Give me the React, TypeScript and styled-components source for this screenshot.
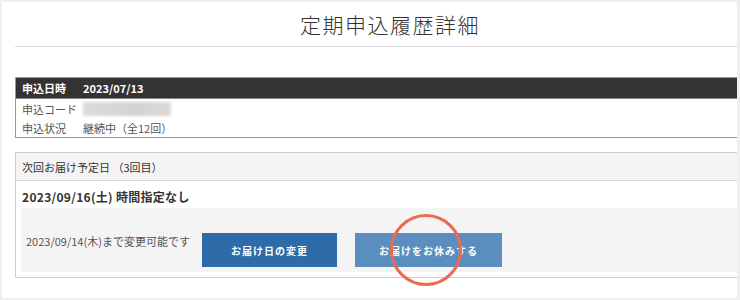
import styled, { createGlobalStyle } from "styled-components";

const GlobalStyle = createGlobalStyle`
  html, body {
    margin: 0;
    padding: 0;
    background: #efefef;
  }
  body {
    font-family: "Noto Sans CJK JP", "Noto Sans", sans-serif;
    color: #333;
  }
`;

const Page = styled.div`
  width: 740px;
  height: 300px;
  box-sizing: border-box;
  padding: 2px 3px 2px 2px;
  overflow: hidden;
`;

const Panel = styled.div`
  background: #fff;
  height: 100%;
  box-sizing: border-box;
  padding-left: 13px;
`;

const Title = styled.h1`
  margin: 0;
  height: 44px;
  border-bottom: 1px solid #ddd;
  display: flex;
  align-items: center;
  justify-content: center;
  padding-left: 28px;
  font-size: 21px;
  font-weight: 300;
  letter-spacing: 1.5px;
  color: #333;
`;

const InfoBox = styled.div`
  margin-top: 30px;
  border: 1px solid #999;
  border-right: none;
`;

const InfoHead = styled.div`
  height: 20px;
  background: #333;
  border-bottom: 1px solid #888;
  display: flex;
  align-items: center;
  padding-left: 6px;
  color: #fff;
  font-size: 11px;
  font-weight: bold;
`;

const InfoRow = styled.div`
  height: 19px;
  display: flex;
  align-items: center;
  padding-left: 6px;
  font-size: 11px;
  color: #555;
`;

const Label = styled.span`
  width: 61px;
  flex-shrink: 0;
`;

const Hidden = styled.span`
  width: 88px;
  height: 14px;
  background: linear-gradient(90deg, #dcdcdc, #d2d2d2 60%, #dadada);
  filter: blur(1.5px);
`;

const DeliveryBox = styled.div`
  margin-top: 14px;
  border: 1px solid #ccc;
  border-right: none;
`;

const DeliveryHead = styled.div`
  height: 27px;
  background: #f4f4f4;
  border-bottom: 1px solid #d5d5d5;
  display: flex;
  align-items: center;
  padding-left: 6px;
  font-size: 11px;
  color: #333;
`;

const DateRow = styled.div`
  height: 23px;
  padding: 4px 0 0 6px;
  display: flex;
  align-items: center;
  font-size: 12px;
  font-weight: bold;
  letter-spacing: 0.3px;
  color: #333;
`;

const ActionArea = styled.div`
  margin: 0 0 5px 5px;
  background: #f4f4f4;
  padding: 25px 0 5px 5px;
  display: flex;
  align-items: flex-start;
`;

const Notice = styled.div`
  width: 176px;
  padding-top: 1px;
  font-size: 11px;
  line-height: 14px;
  color: #555;
`;

const ActionButton = styled.button<{ $width: number; $tone: "primary" | "soft" }>`
  position: relative;
  width: ${(p) => p.$width}px;
  height: 34px;
  margin-right: 18px;
  border: none;
  padding: 0;
  background: ${(p) => (p.$tone === "primary" ? "#2e6ba9" : "#5b8ebf")};
  color: #fff;
  font-family: inherit;
  font-size: 10px;
  font-weight: bold;
  letter-spacing: 1px;
  cursor: pointer;
`;

// annotation ring drawn over the second button
const Highlight = styled.span`
  position: absolute;
  left: 35px;
  top: -19px;
  width: 66px;
  height: 66px;
  border: 3.5px solid #ec6a4e;
  border-radius: 50%;
  pointer-events: none;
`;

export default function App() {
  return (
    <>
      <GlobalStyle />
      <Page>
        <Panel>
          <Title>定期申込履歴詳細</Title>

          <InfoBox>
            <InfoHead>
              <Label>申込日時</Label>
              <span>2023/07/13</span>
            </InfoHead>
            <InfoRow>
              <Label>申込コード</Label>
              <Hidden />
            </InfoRow>
            <InfoRow>
              <Label>申込状況</Label>
              <span>継続中（全12回）</span>
            </InfoRow>
          </InfoBox>

          <DeliveryBox>
            <DeliveryHead>次回お届け予定日 （3回目）</DeliveryHead>
            <DateRow>2023/09/16(土) 時間指定なし</DateRow>
            <ActionArea>
              <Notice>2023/09/14(木)まで変更可能です</Notice>
              <ActionButton $width={135} $tone="primary">
                お届け日の変更
              </ActionButton>
              <ActionButton $width={147} $tone="soft">
                お届けをお休みする
                <Highlight />
              </ActionButton>
            </ActionArea>
          </DeliveryBox>
        </Panel>
      </Page>
    </>
  );
}
